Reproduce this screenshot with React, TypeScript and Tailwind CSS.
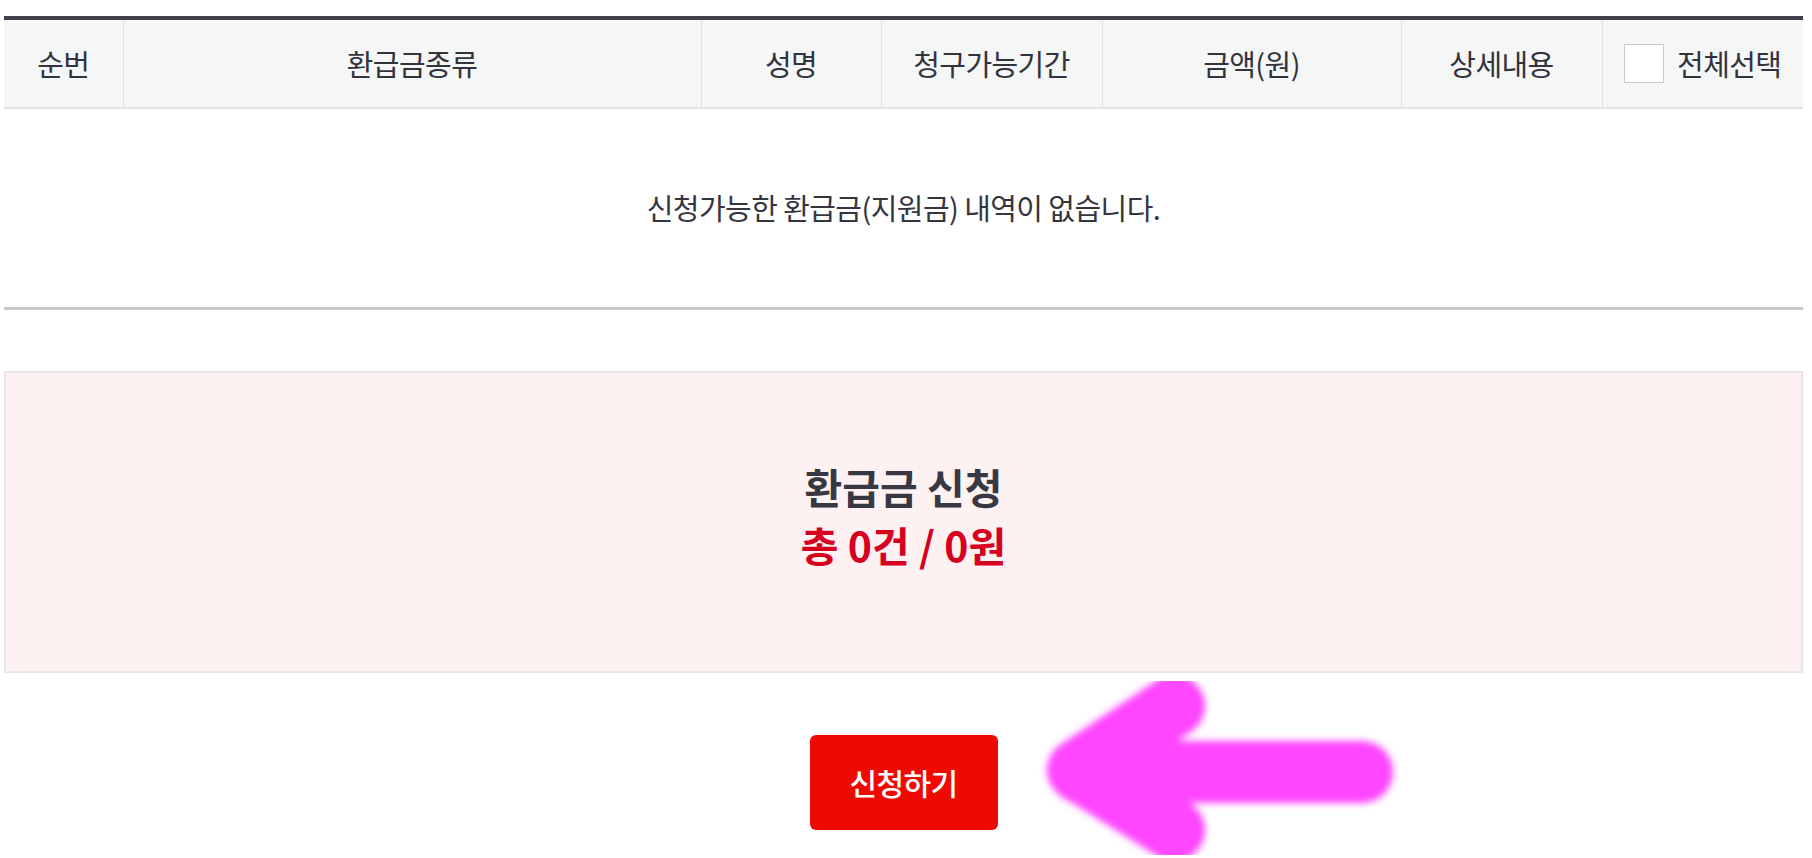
import { useState } from 'react';

const COLUMNS = [
  { label: '순번', width: 'w-[119px]' },
  { label: '환급금종류', width: 'w-[578px]' },
  { label: '성명', width: 'w-[180px]' },
  { label: '청구가능기간', width: 'w-[221px]' },
  { label: '금액(원)', width: 'w-[299px]' },
  { label: '상세내용', width: 'w-[201px]' },
];

function PinkArrow() {
  // hand-drawn annotation over the page
  return (
    <svg
      className="absolute left-[1020px] top-[650px] pointer-events-none"
      width="420"
      height="208"
      viewBox="1020 650 420 208"
    >
      <defs>
        <filter id="soft" x="-20%" y="-20%" width="140%" height="140%">
          <feGaussianBlur stdDeviation="3.5" />
        </filter>
      </defs>
      <g
        filter="url(#soft)"
        stroke="#ff45ff"
        strokeWidth="62"
        strokeLinecap="round"
        strokeLinejoin="round"
        fill="none"
      >
        <path d="M1080 772 L1362 772" />
        <path d="M1174 706 L1078 770 L1174 830" />
      </g>
    </svg>
  );
}

export default function App() {
  const [allChecked, setAllChecked] = useState(false);
  const count = 0;
  const total = 0;

  return (
    <div className="relative min-h-[858px] bg-white pl-[4px] pr-[9px] pt-[16px] font-['Noto_Sans_CJK_KR','Noto_Sans',sans-serif] text-[#33333d]">
      {/* Table */}
      <table className="w-full table-fixed border-collapse">
        <colgroup>
          {COLUMNS.map((c) => (
            <col key={c.label} className={c.width} />
          ))}
          <col className="w-[201px]" />
        </colgroup>
        <thead>
          <tr className="h-[90px] border-t-4 border-[#3f3f4d] bg-[#f5f6f6]">
            {COLUMNS.map((c, i) => (
              <th
                key={c.label}
                className={`border-b-2 border-b-[#e2e3e5] text-[29px] tracking-[-0.02em] font-normal ${
                  i > 0 ? 'border-l border-l-[#e0e1e3]' : ''
                }`}
              >
                {c.label}
              </th>
            ))}
            <th className="border-b-2 border-l border-b-[#e2e3e5] border-l-[#e0e1e3] text-[29px] tracking-[-0.02em] font-normal">
              <label className="flex items-center justify-center gap-[13px] cursor-pointer">
                <input
                  type="checkbox"
                  checked={allChecked}
                  onChange={(e) => setAllChecked(e.target.checked)}
                  className="sr-only"
                />
                <span className="w-[40px] h-[39px] border border-[#c9c9c9] bg-white" />
                <span>전체선택</span>
              </label>
            </th>
          </tr>
        </thead>
        <tbody>
          <tr className="h-[200px] border-b-[3px] border-[#cacaca]">
            <td colSpan={7} className="text-center text-[29px] tracking-[-0.02em] text-[#35353f]">
              신청가능한 환급금(지원금) 내역이 없습니다.
            </td>
          </tr>
        </tbody>
      </table>

      {/* Summary */}
      <div className="mt-[61px] border-2 border-[#e6e6e8] bg-[#fdf1f2] pt-[84px] pb-[98px] text-center">
        <p className="text-[41px] leading-[58px] font-bold text-[#383844]">환급금 신청</p>
        <p className="text-[41px] leading-[58px] font-bold text-[#d7001f]">
          총 {count}건 / {total}원
        </p>
      </div>

      {/* Submit */}
      <div className="flex justify-center pt-[62px] pb-[28px]">
        <button className="w-[188px] h-[95px] rounded-[6px] bg-[#ee0a00] text-white text-[30px] tracking-[-0.02em] font-medium">
          신청하기
        </button>
      </div>

      <PinkArrow />
    </div>
  );
}
